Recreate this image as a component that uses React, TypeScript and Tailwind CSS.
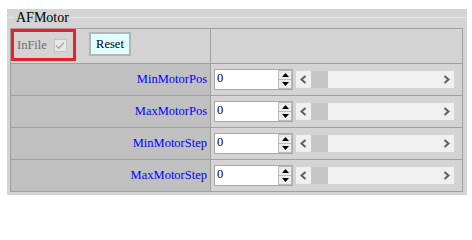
import React from 'react';

const fields = ['MinMotorPos', 'MaxMotorPos', 'MinMotorStep', 'MaxMotorStep'];

function Chevron({ right }: { right?: boolean }) {
  return (
    <svg width="7" height="9" viewBox="0 0 7 9" className="block">
      <path
        d={right ? 'M1.5 1 L5.5 4.5 L1.5 8' : 'M5.5 1 L1.5 4.5 L5.5 8'}
        fill="none"
        stroke="#606060"
        strokeWidth="2"
      />
    </svg>
  );
}

function NumberBox() {
  return (
    <div className="shrink-0 flex w-[79px] h-[21px] bg-white border border-[#a9a9a9]">
      <span className="flex-1 pl-[2px] text-[12.5px] leading-[16px] text-black">0</span>
      <div className="flex flex-col w-[14px] h-full">
        <div className="flex-1 flex items-center justify-center bg-[#ececec] border border-[#bcbcbc]">
          <svg width="7" height="4" viewBox="0 0 7 4" className="block">
            <path d="M0 4 L3.5 0 L7 4 Z" fill="#000" />
          </svg>
        </div>
        <div className="flex-1 flex items-center justify-center bg-[#ececec] border border-t-0 border-[#bcbcbc]">
          <svg width="7" height="4" viewBox="0 0 7 4" className="block">
            <path d="M0 0 L7 0 L3.5 4 Z" fill="#000" />
          </svg>
        </div>
      </div>
    </div>
  );
}

function Slider() {
  return (
    <div className="shrink-0 ml-[3px] flex items-stretch w-[158px] h-[17px] bg-[#f0f0f0]">
      <div className="shrink-0 w-[15px] flex items-center justify-center">
        <Chevron />
      </div>
      <div className="shrink-0 w-[17px] bg-[#c6c6c6]" />
      <div className="flex-1 bg-[#f0f0f0]" />
      <div className="shrink-0 w-[15px] flex items-center justify-center">
        <Chevron right />
      </div>
    </div>
  );
}

export default function App() {
  return (
    <div className="w-[472px] h-[200px] bg-white pt-[9px] pl-[7px] font-['Liberation_Serif',serif]">
      <div className="w-[460px] h-[186px] bg-[#d4d4d4]">
        {/* legend line */}
        <div className="h-[19px] flex items-start">
          <div className="mt-[8px] w-[7px] h-px bg-[#e6e6e6]" />
          <span className="pl-[2px] pr-[2px] pt-[1px] text-[14px] leading-[16px] text-black">AFMotor</span>
          <div className="mt-[8px] flex-1 h-px bg-[#e6e6e6]" />
        </div>

        <div className="pl-[3px] pr-[4px] pb-[4px]">
          <div className="border border-[#a0a0a0]">
            <div className="flex h-[34px]">
              <div className="w-[200px] border-r border-[#a0a0a0] flex items-start">
                <div className="w-[65px] h-[32px] border-[3px] border-[#e8202a] flex items-center pl-[3px]">
                  <span className="text-[12.5px] leading-none text-[#6d6d6d]">InFile</span>
                  <div className="ml-[7px] w-[13px] h-[13px] bg-[#e8e8e8] border border-[#c4c4c4] flex items-center justify-center">
                    <svg width="10" height="9" viewBox="0 0 10 9" className="block">
                      <path d="M1 4.5 L3.8 7.3 L9 1.5" fill="none" stroke="#a8a8a8" strokeWidth="1.3" />
                    </svg>
                  </div>
                </div>
                <button className="ml-[13px] mt-[3px] w-[42px] h-[24px] bg-[#e0ffff] border-2 border-[#b4b4b4] text-[12.5px] leading-none text-black">
                  Reset
                </button>
              </div>
              <div className="flex-1" />
            </div>

            {fields.map((f) => (
              <div key={f} className="flex h-[32px] border-t border-[#a0a0a0]">
                <div className="w-[200px] border-r border-[#a0a0a0] bg-[#c0c0c0] flex items-center justify-end pr-[3px]">
                  <span className="text-[12.5px] leading-none text-[#0000ff]">{f}</span>
                </div>
                <div className="flex-1 flex items-center pl-[3px]">
                  <NumberBox />
                  <Slider />
                </div>
              </div>
            ))}
          </div>
        </div>
      </div>
    </div>
  );
}
